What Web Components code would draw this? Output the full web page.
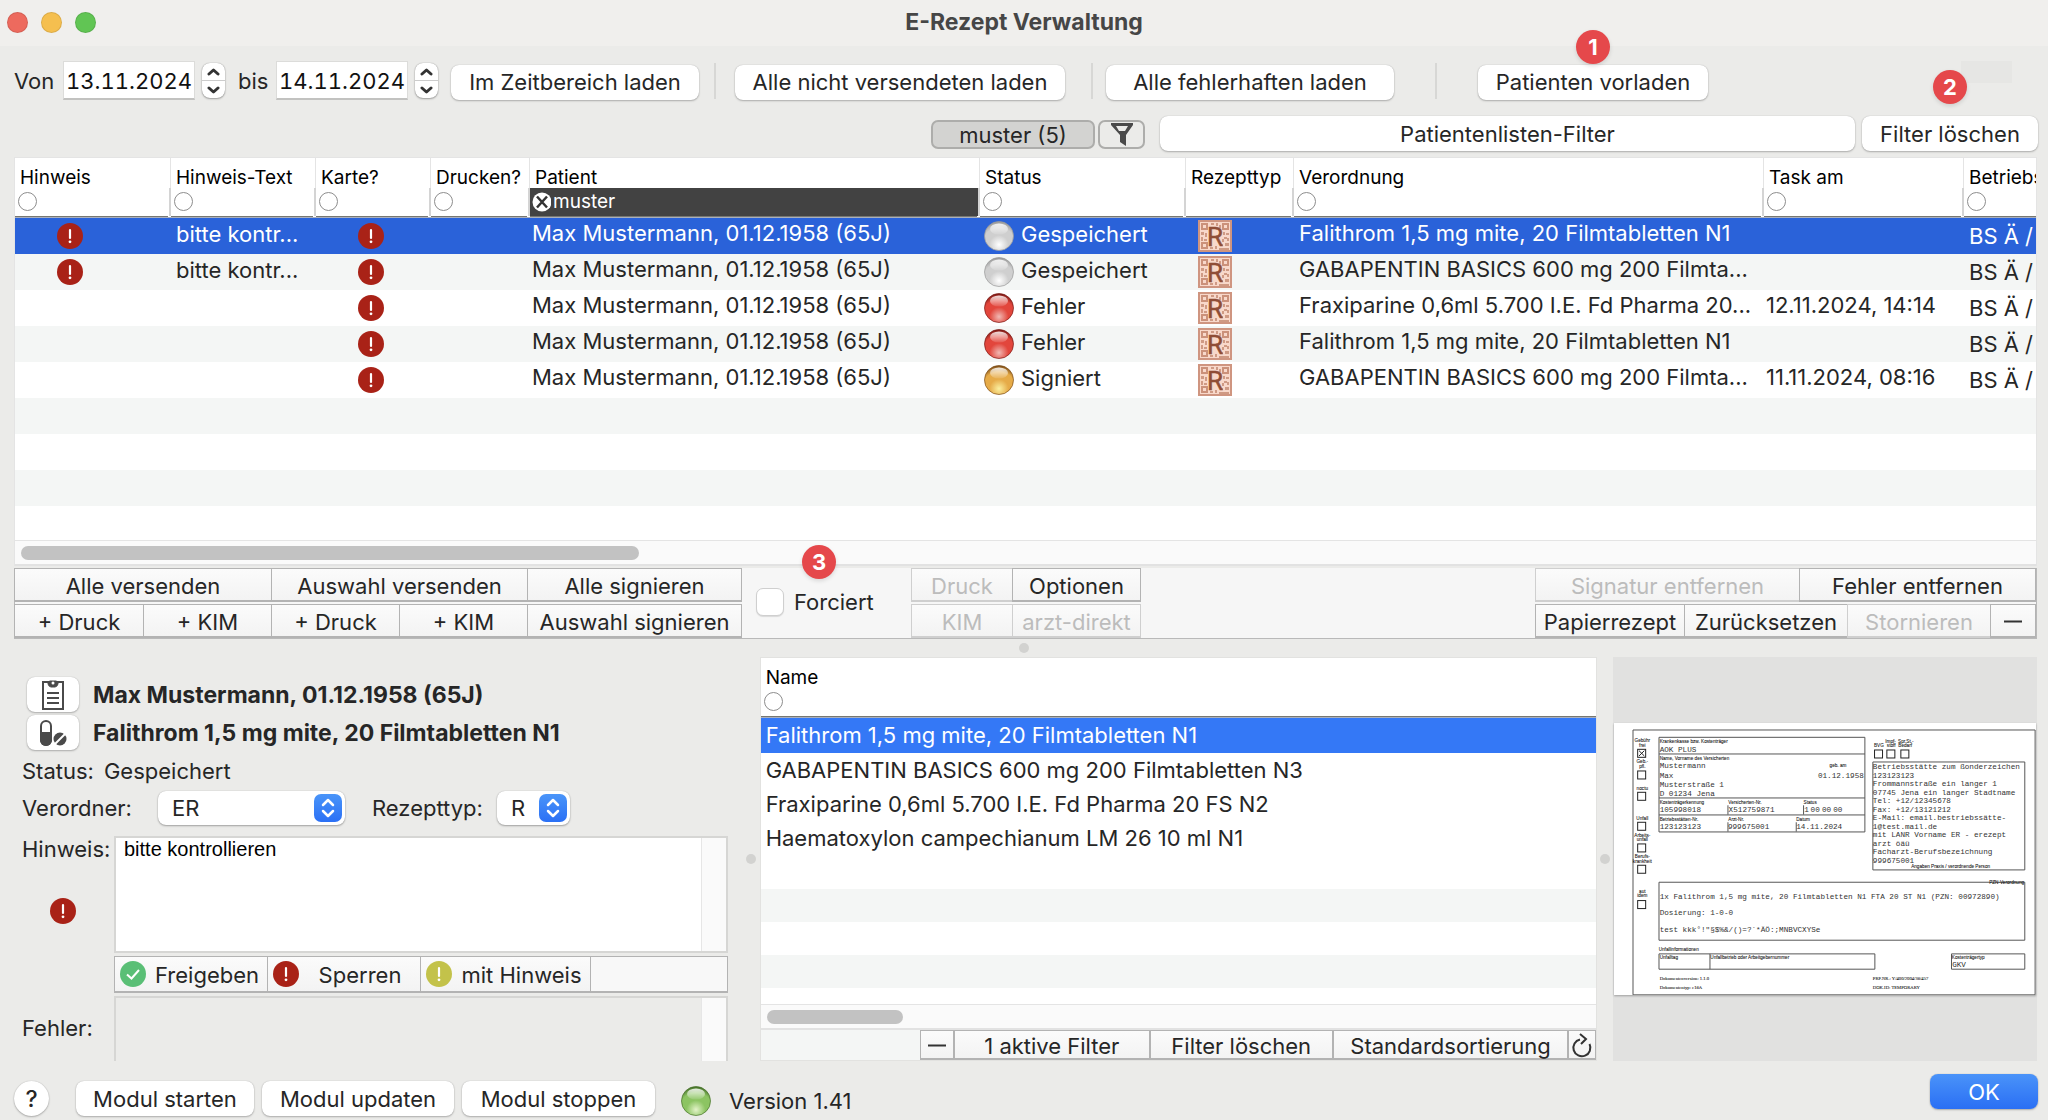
<!DOCTYPE html>
<html lang="de">
<head>
<meta charset="utf-8">
<title>E-Rezept Verwaltung</title>
<style>
html,body{margin:0;height:100%}
body{background:#ebebe9;color:#262626;font:22px/26px Inter,"Liberation Sans",sans-serif}
</style>
</head>
<body>
<rezept-window></rezept-window>
<script>
const BASE = `*{box-sizing:border-box}
button,input,select,textarea{font:inherit;color:inherit;margin:0;padding:0;border:0;background:none;outline:0}
svg{display:block}`;

class Part extends HTMLElement {
  connectedCallback() {
    if (this.shadowRoot) return;
    this.attachShadow({ mode: 'open' }).innerHTML = `<style>${BASE}${this.css()}</style>${this.html()}`;
  }
  css() { return ''; }
  html() { return '<slot></slot>'; }
  a(name, fallback = '') { return this.getAttribute(name) ?? fallback; }
}

customElements.define('mac-button', class extends Part {
  css() { return `
    :host{display:block;height:35px}
    button{width:100%;height:100%;display:flex;align-items:center;justify-content:center;border-radius:8px;background:#fff;white-space:nowrap;
      box-shadow:0 0 1px rgba(0,0,0,.25),0 1px 2px rgba(0,0,0,.25)}
    :host([kind=primary]) button{background:linear-gradient(#4a93f9,#2a6ff4);color:#fff}
    :host([kind=round]) button{border-radius:50%;font-size:23px;font-weight:500}
    :host([kind=toggle]),:host([kind=outline]){height:29px}
    :host([kind=toggle]) button{background:#d3d3d1;border:2px solid #adadab;box-shadow:none;border-radius:7px}
    :host([kind=outline]) button{background:#ebebe9;border:2px solid #adadab;box-shadow:none;border-radius:7px}`; }
  html() { return `<button type="button" aria-label="${this.a('label')}"><slot></slot></button>`.replace(' aria-label=""', ''); }
});

customElements.define('seg-button', class extends Part {
  css() { return `
    :host{display:block;height:34px;min-width:0}
    button{width:100%;height:100%;display:flex;align-items:center;justify-content:center;gap:8px;white-space:nowrap;padding-top:2px;
      border:1px solid #b3b3b3;border-bottom-width:2px;background:linear-gradient(#fbfbfb,#f3f3f3)}
    button:disabled{color:#bcbcbc;border-color:#cfcfcf}`; }
  html() { return `<button type="button" ${this.hasAttribute('off') ? 'disabled' : ''}><slot></slot></button>`; }
});

customElements.define('date-field', class extends Part {
  css() { return `
    :host{display:flex;align-items:center}
    input{width:132px;height:39px;background:#fff;text-align:center;border:1px solid #dcdcda;border-bottom:2px solid #c2c2c0;color:#111;font-variant-numeric:tabular-nums;padding-top:2px}
    label{width:${this.a('lw')}px}
    .step{display:flex;flex-direction:column;width:23px;height:35px;margin-left:7px;border-radius:8px;background:#fff;box-shadow:0 0 1px rgba(0,0,0,.4),0 1px 2px rgba(0,0,0,.3)}
    .step button{flex:1;display:grid;place-items:center}
    .step button+button{border-top:1px solid #ccc}`; }
  html() { return `
    <label for="d">${this.a('label')}</label><input id="d" value="${this.a('value')}">
    <div class="step">
      <button type="button" aria-label="Tag vor"><svg width="13" height="8" fill="none" stroke="#333" stroke-width="3" stroke-linecap="round" stroke-linejoin="round"><path d="M2 6 6.500 2 11 6"/></svg></button>
      <button type="button" aria-label="Tag zurück"><svg width="13" height="8" fill="none" stroke="#333" stroke-width="3" stroke-linecap="round" stroke-linejoin="round"><path d="M2 2 6.500 6 11 2"/></svg></button>
    </div>`; }
});

customElements.define('num-badge', class extends Part {
  css() { return `
    :host{position:absolute;left:50%;width:34px;height:34px;margin-left:-17px;border-radius:50%;background:#e5484b;color:#fff;
      font-weight:700;font-size:22px;line-height:34px;text-align:center;box-shadow:0 2px 4px rgba(0,0,0,.12);z-index:2}`; }
});

customElements.define('alert-icon', class extends Part {
  css() { return `:host{display:inline-block;width:26px;height:26px;flex:none}`; }
  html() {
    const kind = this.a('kind', 'red');
    const fill = { red: '#a92217', green: '#5abf76', yellow: '#c3c24a' }[kind];
    const mark = kind === 'green'
      ? '<path d="M7 13.500 11.500 17.500 19 9" fill="none" stroke="#fff" stroke-width="2"/>'
      : '<path d="M13 7v8" stroke="#fff" stroke-width="2.200" stroke-linecap="round"/><circle cx="13" cy="18.800" r="1.400" fill="#fff"/>';
    return `<svg width="26" height="26"><circle cx="13" cy="13" r="13" fill="${fill}"/>${mark}</svg>`;
  }
});

customElements.define('status-ball', class extends Part {
  css() { return `:host{display:inline-block;width:30px;height:30px;flex:none}`; }
  html() {
    const [edge, mid, low] = {
      grey: ['#9b9b9b', '#cfcfcf', '#ffffff'], red: ['#7e1b17', '#e2463c', '#f0b9b4'],
      gold: ['#80501a', '#e6ab48', '#fbf0a0'], green: ['#47722a', '#8cc462', '#e3f3c8']
    }[this.a('color')];
    return `<svg width="30" height="30" viewBox="0 0 30 30">
      <defs><radialGradient id="g" cx=".5" cy=".8" r=".78"><stop offset="0" stop-color="${low}"/><stop offset=".42" stop-color="${mid}"/><stop offset=".75" stop-color="${mid}"/><stop offset="1" stop-color="${edge}"/></radialGradient>
      <linearGradient id="h" x1="0" y1="0" x2="0" y2="1"><stop offset="0" stop-color="#fff" stop-opacity=".85"/><stop offset="1" stop-color="#fff" stop-opacity=".1"/></linearGradient></defs>
      <circle cx="15" cy="15" r="14.500" fill="url(#g)" stroke="${edge}" stroke-opacity=".7"/><ellipse cx="15" cy="8" rx="9" ry="5.500" fill="url(#h)"/></svg>`;
  }
});

customElements.define('code-icon', class extends Part {
  css() { return `:host{display:inline-block;width:34px;height:32px}`; }
  html() { return `<svg width="34" height="32" viewBox="0 0 34 32">
    <rect x="1" y="1" width="32" height="30" fill="#f8d8ca" stroke="#cf9580" stroke-width="2"/>
    <g fill="none" stroke="#cb917a" stroke-width="2"><rect x="4" y="4" width="5" height="5"/><rect x="25" y="4" width="5" height="5"/><rect x="4" y="23" width="5" height="5"/></g>
    <g fill="#cf9a84"><path d="M13 3h3v2h-3zM18 3h2v3h-2zM21 5h2v3h-2zM12 27h3v2h-3zM17 26h2v3h-2zM21 28h10v2H21zM22 24h3v2h-3zM27 23h4v3h-4zM3 12h3v3H3zM7 13h2v4H7zM3 17h2v4H3zM6 19h3v2H6zM25 12h2v3h-2zM28 13h3v2h-3zM26 17h3v2h-3zM29 18h2v3h-2zM24 19h2v3h-2z"/></g>
    <text x="17" y="26" text-anchor="middle" font-family="Roboto,sans-serif" font-size="26" fill="#8f4d36" stroke="#8f4d36" stroke-width=".5">R</text></svg>`; }
});

customElements.define('column-filter', class extends Part {
  css() { return `:host{display:block}button{display:block;width:19px;height:19px;border:1px solid #8d8d8d;border-radius:50%;background:#fff}`; }
  html() { return `<button type="button" aria-label="Spalte filtern"></button>`; }
});

customElements.define('scroll-strip', class extends Part {
  css() { return `
    :host{display:block;height:26px;flex:none;background:#fafafa;border-top:1px solid #e4e4e4;border-bottom:2px solid #e2e2e2;padding:5px 6px}
    i{display:block;height:14px;border-radius:7px;background:#c2c2c2;width:${this.a('thumb')}}`; }
  html() { return '<i></i>'; }
});

const HEAD = `
  th{padding:0;text-align:left;font-weight:400;font-size:19px;line-height:20px;color:#000;vertical-align:top;height:60px;background:#fff;overflow:hidden;white-space:nowrap;border-bottom:1px solid #a9b0bd}
  .cap{height:30px;padding:10px 0 0 5px;border-right:1px solid #e4e4e4}
  .fil{height:28px;padding:4px 0 0 3px;border-right:2px solid #d4d4d4}
  .line{height:1px;background:#777770;margin-right:3px}
  th:last-child .cap,th:last-child .fil{border-right:0}
  th:last-child .line{margin-right:0}
  .active .fil{background:#424242;color:#fff;display:flex;align-items:center;padding:0 0 0 2px}
  .active input{width:100%;min-width:0;margin-left:2px}`;

customElements.define('rezept-table', class extends Part {
  css() { return `
    :host{display:flex;flex-direction:column;border:1px solid #e4e4e4;border-bottom:0;min-height:0;overflow:hidden}
    .body{flex:1;min-height:0;overflow:hidden;background:repeating-linear-gradient(#f4f6f5 0 36px,#fff 36px 72px) 0 24px}
    table{border-collapse:separate;border-spacing:0;table-layout:fixed;width:100%}
    ${HEAD}
    td{padding:0 0 5px 2px;height:36px;white-space:nowrap;overflow:hidden;line-height:31px;vertical-align:middle}
    tr:nth-child(odd) td{background:#fff}
    tr:nth-child(even) td{background:#f4f6f5}
    tr.on td{background:#2a62d9;color:#fff}
    td.drug{padding-left:5px}
    td.hint{padding:0 0 3px 5px}
    td.bs{padding:1px 0 0 5px}
    td.ico,td.ico2,td.code{line-height:0;padding:0 0 1px}
    td.ico{padding-right:47px;text-align:center}
    td.ico2{padding-right:5px;text-align:center}
    td.code{padding-left:12px}
    td alert-icon,td code-icon{vertical-align:top}
    td.state{padding:0 0 1px 4px}
    .st{display:flex;align-items:center;gap:7px}
    .st span{padding-bottom:3px}`; }
  html() {
    const cols = [['Hinweis', 156], ['Hinweis-Text', 145], ['Karte?', 115], ['Drucken?', 99], ['Patient', 450], ['Status', 206], ['Rezepttyp', 108], ['Verordnung', 470], ['Task am', 200], ['Betriebs', '']];
    const rows = [
      [1, 'grey', 'Gespeichert', 'Falithrom 1,5 mg mite, 20 Filmtabletten N1', ''],
      [1, 'grey', 'Gespeichert', 'GABAPENTIN BASICS 600 mg 200 Filmta...', ''],
      [0, 'red', 'Fehler', 'Fraxiparine 0,6ml 5.700 I.E. Fd Pharma 20...', '12.11.2024, 14:14'],
      [0, 'red', 'Fehler', 'Falithrom 1,5 mg mite, 20 Filmtabletten N1', ''],
      [0, 'gold', 'Signiert', 'GABAPENTIN BASICS 600 mg 200 Filmta...', '11.11.2024, 08:16']];
    const th = ([name]) => name === 'Patient'
      ? `<th class="active"><div class="cap">${name}</div><div class="fil"><svg width="20" height="20"><circle cx="10" cy="10" r="9.500" fill="#fff"/><path d="M5 4.500 15 15.500M15 4.500 5 15.500" stroke="#333" stroke-width="2.500"/></svg><input aria-label="Patient filtern" value="muster"></div><div class="line"></div></th>`
      : `<th><div class="cap">${name}</div><div class="fil">${name === 'Rezepttyp' ? '' : '<column-filter></column-filter>'}</div><div class="line"></div></th>`;
    return `<div class="body"><table><colgroup>${cols.map(c => `<col${c[1] ? ` style="width:${c[1]}px"` : ''}>`).join('')}</colgroup>
      <thead><tr>${cols.map(th).join('')}</tr></thead>
      <tbody>${rows.map(([hint, color, status, drug, task], i) => `<tr class="${i ? '' : 'on'}">
        <td class="ico">${hint ? '<alert-icon></alert-icon>' : ''}</td><td class="hint">${hint ? 'bitte kontr...' : ''}</td>
        <td class="ico2"><alert-icon></alert-icon></td><td></td><td>Max Mustermann, 01.12.1958 (65J)</td>
        <td class="state"><div class="st"><status-ball color="${color}"></status-ball><span>${status}</span></div></td>
        <td class="code"><code-icon></code-icon></td><td class="drug">${drug}</td><td>${task}</td><td class="bs">BS Ä /</td></tr>`).join('')}</tbody></table></div>
      <scroll-strip thumb="618px"></scroll-strip>`;
  }
});

customElements.define('name-table', class extends Part {
  css() { return `
    :host{display:flex;flex-direction:column;min-width:0}
    .box{flex:1;display:flex;flex-direction:column;min-height:0;border:1px solid #e2e2e0;border-bottom:0}
    .body{flex:1;min-height:0;overflow:hidden;background:repeating-linear-gradient(#f4f6f5 0 33px,#fff 33px 66px) 0 33px}
    table{border-collapse:separate;border-spacing:0;width:100%}
    ${HEAD}
    td{padding:0 0 0 5px;height:34px;line-height:34px;background:#fff;white-space:nowrap}
    tr.on td{background:#3478f6;color:#fff;padding-bottom:1px}
    tr:last-child td{height:68px;vertical-align:top}
    .foot{display:grid;grid-template-columns:minmax(0,160fr) 34px minmax(0,196fr) minmax(0,184fr) minmax(0,236fr) 28px;border:1px solid #e2e2e0;border-top:0;background:#f4f6f5}
    seg-button{height:30px}`; }
  html() {
    const names = ['Falithrom 1,5 mg mite, 20 Filmtabletten N1', 'GABAPENTIN BASICS 600 mg 200 Filmtabletten N3', 'Fraxiparine 0,6ml 5.700 I.E. Fd Pharma 20 FS N2', 'Haematoxylon campechianum LM 26 10 ml N1'];
    return `<div class="box"><div class="body"><table><thead><tr><th><div class="cap">Name</div><div class="fil"><column-filter></column-filter></div><div class="line"></div></th></tr></thead>
      <tbody>${names.map((n, i) => `<tr class="${i ? '' : 'on'}"><td>${n}</td></tr>`).join('')}</tbody></table></div>
      <scroll-strip thumb="136px"></scroll-strip></div>
      <div class="foot"><span></span><seg-button><svg width="18" height="3"><path d="M0 1.500h18" stroke="#333" stroke-width="2"/></svg></seg-button>
      <seg-button>1 aktive Filter</seg-button><seg-button>Filter löschen</seg-button><seg-button>Standardsortierung</seg-button>
      <seg-button><svg width="22" height="26" fill="none" stroke="#333" stroke-width="2"><path d="M9 6.500A8.500 8.500 0 1 0 18.500 11M9 1l6 5-5 5"/></svg></seg-button></div>`;
  }
});

customElements.define('popup-select', class extends Part {
  css() { return `
    :host{display:flex;align-items:center}
    label{width:${this.a('lw')}px;flex:none}
    .wrap{display:grid;width:${this.a('w')}px}
    .wrap>*{grid-area:1/1}
    select{appearance:none;height:34px;border-radius:8px;background:#fff;padding-left:14px;box-shadow:0 0 1px rgba(0,0,0,.25),0 1px 2px rgba(0,0,0,.3)}
    svg{justify-self:end;align-self:center;margin-right:3px;pointer-events:none}`; }
  html() { return `<label for="s">${this.a('label')}</label><div class="wrap"><select id="s"><option>${this.a('value')}</option></select>
    <svg width="28" height="28"><defs><linearGradient id="b" x2="0" y2="1"><stop stop-color="#4a95f9"/><stop offset="1" stop-color="#2b70f5"/></linearGradient></defs>
    <rect width="28" height="28" rx="7" fill="url(#b)"/><path d="M9 11 14 6l5 5M9 17l5 5 5-5" fill="none" stroke="#fff" stroke-width="2.500" stroke-linecap="round" stroke-linejoin="round"/></svg></div>`; }
});

customElements.define('detail-panel', class extends Part {
  css() { return `
    :host{display:flex;flex-direction:column;padding:20px 0 0 8px;min-width:0}
    .head{display:grid;grid-template-columns:52px 1fr;column-gap:14px;row-gap:3px;margin-left:5px;font-weight:700;font-size:23px;align-items:center}
    .head mac-button{height:35px}
    .status{display:flex;gap:10px;margin-top:8px;height:26px}
    .picks{display:flex;gap:27px;margin-top:7px}
    .grid{display:grid;grid-template-columns:92px minmax(0,1fr);margin-top:11px;row-gap:3px}
    .side{display:flex;flex-direction:column}
    .side alert-icon{margin:36px 0 0 28px}
    .memo{display:flex;border:2px solid #d6d6d4}
    textarea{flex:1;height:113px;resize:none;background:#fff;color:#000;font:20px/22px "Liberation Sans",sans-serif;padding:0 8px;display:block;min-width:0;overflow:hidden}
    .track{width:25px;background:#fafafa;border-left:1px solid #e6e6e6}
    .acts{display:grid;grid-template-columns:153px 153px 170px 1fr;border:1px solid #b3b3b3;border-bottom-width:2px;grid-column:2;background:#f8f8f8}
    .acts button{display:flex;align-items:center;height:34px;border-right:1px solid #b3b3b3;padding:0 3px 0 5px;background:linear-gradient(#fbfbfb,#f3f3f3)}
    .acts span{flex:1;text-align:center;padding:2px 0 0 4px}
    .err{border-bottom:0}
    .err textarea{height:63px;background:#ebebe9}
    .errl{align-self:center;padding-bottom:2px}`; }
  html() { return `
    <div class="head">
      <mac-button label="Patient"><svg width="24" height="30" fill="none" stroke="#4a4a4a" stroke-width="2"><rect x="2" y="2" width="20" height="27"/><path d="M7 2v2q1 3 3 3h4q2 0 3-3V2l-2-1H9z" fill="#4a4a4a" stroke-width="1"/><circle cx="12" cy="3" r="1.500" fill="#fff" stroke="none"/><path d="M6 13h12M6 18h12M6 23h12"/></svg></mac-button>
      <span>Max Mustermann, 01.12.1958 (65J)</span>
      <mac-button label="Medikament"><svg width="28" height="28"><rect x="2" y="2" width="10" height="24" rx="5" fill="#fff" stroke="#4a4a4a" stroke-width="2"/><path d="M1 13h12v8a6 6 0 0 1-12 0z" fill="#4a4a4a"/><circle cx="21" cy="20" r="6.500" fill="#4a4a4a"/><path d="M16 25 26 15" stroke="#fff" stroke-width="2"/></svg></mac-button>
      <span>Falithrom 1,5 mg mite, 20 Filmtabletten N1</span>
    </div>
    <div class="status"><span>Status:</span><span>Gespeichert</span></div>
    <div class="picks"><popup-select label="Verordner:" value="ER" lw="136" w="187"></popup-select><popup-select label="Rezepttyp:" value="R" lw="125" w="73"></popup-select></div>
    <div class="grid">
      <div class="side"><label for="h">Hinweis:</label><alert-icon></alert-icon></div>
      <div class="memo"><textarea id="h">bitte kontrollieren</textarea><div class="track"></div></div>
      <div class="acts"><button type="button"><alert-icon kind="green"></alert-icon><span>Freigeben</span></button><button type="button"><alert-icon></alert-icon><span>Sperren</span></button><button type="button"><alert-icon kind="yellow"></alert-icon><span>mit Hinweis</span></button></div>
      <label class="errl" for="f">Fehler:</label>
      <div class="memo err"><textarea id="f" readonly></textarea><div class="track"></div></div>
    </div>`; }
});

customElements.define('rezept-preview', class extends Part {
  css() { return `
    :host{display:flex;align-items:center;background:#e1e1e0;min-width:0;padding:0 1px}
    svg{width:100%;height:auto;background:#fff;box-shadow:0 1px 2px rgba(0,0,0,.3)}
    .m{font-family:"Liberation Mono",monospace;font-size:23px;fill:#333}
    .s{font-family:"Liberation Sans",sans-serif;font-size:14px;fill:#111;stroke:#111;stroke-width:.2px}
    .r{font-family:"Liberation Serif",serif;font-size:14px;fill:#111;stroke:#111;stroke-width:.2px}
    .c{text-anchor:middle}`; }
  html() {
    const t = (cls, list) => list.map(([x, y, s]) => `<text class="${cls}" x="${x}" y="${y}">${s}</text>`).join('');
    const sq = list => list.map(([x, y]) => `<rect x="${x}" y="${y}" width="24" height="24"/>`).join('');
    return `<svg viewBox="43 37 1266 817" role="img" aria-label="Rezeptvorschau">
      <g fill="none" stroke="#555" stroke-width="3">
      <path d="M100 853V58H1307V853z"/><path d="M178 80H796V364H178zM178 130H796M178 262H796M178 313H796M385 284v28M612 284v28M385 335v28M590 335v28"/>
      <path d="M820 154h456v324H820zM178 515h1098v174H178zM178 730h648v46H178zM331 730v46M1056 730h220v46h-220z"/></g>
      <g fill="none" stroke="#222" stroke-width="3">${sq([[114, 116], [114, 181], [114, 245], [114, 335], [114, 400], [114, 464], [114, 570], [825, 118], [862, 118], [904, 118]])}<path d="M118 120l16 16M134 120l-16 16"/></g>
      ${t('m', [[180, 123, 'AOK PLUS'], [180, 173, 'Mustermann'], [180, 201, 'Max'], [655, 201, '01.12.1958'], [180, 229, 'Musterstraße 1'], [180, 255, 'D 01234 Jena'], [180, 304, '105998018'], [387, 304, 'X512759871'], [614, 304, '1'], [633, 304, '00'], [667, 304, '00'], [701, 304, '00'], [180, 355, '123123123'], [385, 355, '999675001'], [590, 355, '14.11.2024'],
        [180, 565, '1x Falithrom 1,5 mg mite, 20 Filmtabletten N1 FTA 20 ST N1 (PZN: 00972890)'], [180, 614, 'Dosierung: 1-0-0'], [180, 663, 'test kkk°!"§$%&amp;/()=?`*ÄÖ:;MNBVCXYSe'], [1058, 768, 'GKV'],
        ...['Betriebsstätte zum ßonderzeichen', '123123123', 'Frommannstraße ein langer 1', '07745 Jena ein langer Stadtname', 'Tel: +12/12345678', 'Fax: +12/13121212', 'E-Mail: email.bestriebssätte-', '1@test.mail.de', 'mit LANR Vorname ER - erezept', 'arzt öäü', 'Facharzt-Berufsbezeichnung', '999675001'].map((s, i) => [820, 175 + Math.round(i * 25.6), s])])}
      ${t('s', [[180, 97, 'Krankenkasse bzw. Kostenträger'], [180, 148, 'Name, Vorname des Versicherten'], [690, 170, 'geb. am'], [180, 279, 'Kostenträgerkennung'], [386, 279, 'Versicherten-Nr.'], [612, 279, 'Status'], [180, 331, 'Betriebsstätten-Nr.'], [386, 331, 'Arzt-Nr.'], [590, 331, 'Datum'],
        [935, 473, 'Angaben Praxis / verordnende Person'], [1169, 519, 'PZN-Verordnung'], [177, 722, 'Unfallinformationen'], [180, 745, 'Unfalltag'], [332, 745, 'Unfallbetrieb oder Arbeitgebernummer'], [1057, 745, 'Kostenträgertyp']])}
      ${t('s c', [[128, 94, 'Gebühr'], [128, 108, 'frei'], [128, 158, 'Geb.-'], [128, 172, 'pfl.'], [128, 237, 'noctu'], [128, 328, 'Unfall'], [128, 378, 'Arbeits-'], [128, 391, 'unfall'], [128, 442, 'Berufs-'], [128, 456, 'krankheit'], [128, 546, 'aut'], [128, 560, 'idem'], [838, 110, 'BVG'], [873, 96, 'Impf-'], [875, 110, 'stoff'], [919, 96, 'Spr.St.-'], [917, 110, 'Bedarf']])}
      ${t('r', [[180, 808, 'Dokumentenversion: 1.1.0'], [180, 834, 'Dokumententyp: e16A'], [820, 808, 'PRF.NR.: Y/400/2004/36/457'], [820, 834, 'DOK.ID: TEMPORARY']])}</svg>`;
  }
});

customElements.define('action-bar', class extends Part {
  css() { return `
    :host{display:grid;grid-template-columns:129px 128px 128px 128px 214px 170px 101px 128px minmax(0,1fr) auto;grid-template-rows:34px 34px;row-gap:2px;background:#f6f6f6;
      border:1px solid #b9b9b9;border-top:0}
    seg-button{margin-left:-1px}
    .w2{grid-column:span 2}
    .force{grid-row:1/3;grid-column:6;display:flex;align-items:center;position:relative;padding:0 0 2px 14px}
    .force label{margin-left:10px}
    .force input{appearance:none;width:28px;height:28px;border-radius:7px;background:#fff;border:1px solid #cfcfcf;box-shadow:0 1px 1px rgba(0,0,0,.12)}
    .a{grid-row:1}.b{grid-row:2}
    .right{grid-column:10;grid-row:1/3;display:flex;flex-direction:column;gap:2px;width:500px}
    .right div{display:grid;grid-template-columns:264px 236px}
    .right div+div{grid-template-columns:149px 163px 143px 45px}
    num-badge{top:-23px;left:77px}`; }
  html() { return `
    <seg-button class="a w2">Alle versenden</seg-button><seg-button class="a w2">Auswahl versenden</seg-button><seg-button class="a">Alle signieren</seg-button>
    <div class="force"><input type="checkbox" id="c"><label for="c">Forciert</label><num-badge>3</num-badge></div>
    <seg-button class="a" off>Druck</seg-button><seg-button class="a">Optionen</seg-button>
    <seg-button class="b">+ Druck</seg-button><seg-button class="b">+ KIM</seg-button><seg-button class="b">+ Druck</seg-button><seg-button class="b">+ KIM</seg-button><seg-button class="b">Auswahl signieren</seg-button>
    <seg-button class="b" off style="grid-column:7">KIM</seg-button><seg-button class="b" off>arzt-direkt</seg-button>
    <div class="right"><div><seg-button off>Signatur entfernen</seg-button><seg-button>Fehler entfernen</seg-button></div>
    <div><seg-button>Papierrezept</seg-button><seg-button>Zurücksetzen</seg-button><seg-button off>Stornieren</seg-button><seg-button><svg width="18" height="3"><path d="M0 1.500h18" stroke="#333" stroke-width="2"/></svg></seg-button></div></div>`; }
});

customElements.define('window-title', class extends Part {
  css() { return `
    :host{display:grid;grid-template-columns:1fr auto 1fr;align-items:center;height:46px;background:#f0efed;padding:0 7px 2px}
    .dots{display:flex;gap:13px}
    i{width:21px;height:21px;border-radius:50%;background:var(--c);border:1px solid rgba(0,0,0,.1)}
    h1{margin:0;font-size:23px;line-height:26px;font-weight:700;color:#464646}`; }
  html() { return `<div class="dots"><i style="--c:#ed6a5e"></i><i style="--c:#f5bf4f"></i><i style="--c:#61c554"></i></div><h1><slot></slot></h1><span></span>`; }
});

customElements.define('filter-bar', class extends Part {
  css() { return `
    :host{display:block;padding:15px 10px 6px 14px}
    .row{display:flex;align-items:center;height:39px}
    .row mac-button{margin-top:3px}
    .sep{width:2px;height:36px;background:#d7d7d5}
    .at{position:relative}
    .two{display:flex;align-items:center;justify-content:flex-end;height:35px;margin-top:16px}
    .two mac-button[kind]{margin-top:2px}
    .list{width:695px;margin:0 7px 0 15px}
    .fade{width:51px;height:22px;margin-left:253px;background:#e6e6e4;align-self:flex-start}`; }
  html() { return `
    <div class="row"><date-field label="Von" lw="49" value="13.11.2024"></date-field><date-field style="margin-left:13px" label="bis" lw="38" value="14.11.2024"></date-field>
      <mac-button style="width:248px;margin-left:13px">Im Zeitbereich laden</mac-button><span class="sep" style="margin:0 19px 0 15px"></span>
      <mac-button style="width:330px">Alle nicht versendeten laden</mac-button><span class="sep" style="margin:0 13px 0 26px"></span>
      <mac-button style="width:288px">Alle fehlerhaften laden</mac-button><span class="sep" style="margin:0 41px"></span>
      <div class="at"><mac-button style="width:230px">Patienten vorladen</mac-button><num-badge style="top:-32px">1</num-badge></div><span class="fade"></span></div>
    <div class="two"><mac-button kind="toggle" style="width:164px">muster (5)</mac-button>
      <mac-button kind="outline" label="Filter" style="width:47px;margin-left:3px"><svg width="22" height="23"><path d="M0 0h22v2l-7 10v11l-6-4v-7L0 2z" fill="#4a4a4a"/><path d="M5 3h12l-3 5H8z" fill="#ebebe9"/></svg></mac-button>
      <mac-button class="list">Patientenlisten-Filter</mac-button>
      <div class="at"><mac-button style="width:176px">Filter löschen</mac-button><num-badge style="top:-46px">2</num-badge></div></div>`; }
});

customElements.define('window-footer', class extends Part {
  css() { return `
    :host{display:flex;align-items:flex-start;height:59px;padding:13px 10px 0 14px}
    .low{margin-top:7px;height:35px;display:flex;align-items:center}
    .low mac-button+mac-button{margin-left:8px}
    .low mac-button[kind=round]+mac-button{margin-left:27px}
    status-ball{margin:4px 18px 0 26px}
    .v{margin-top:4px}
    .ok{width:108px;margin-left:auto}`; }
  html() { return `<div class="low"><mac-button kind="round" style="width:35px">?</mac-button>
    <mac-button style="width:178px">Modul starten</mac-button><mac-button style="width:192px">Modul updaten</mac-button><mac-button style="width:193px">Modul stoppen</mac-button>
    <status-ball color="green"></status-ball><span class="v">Version 1.41</span></div><mac-button class="ok" kind="primary">OK</mac-button>`; }
});

customElements.define('split-grip', class extends Part {
  css() { return `:host{display:grid;place-items:center}i{width:10px;height:10px;border-radius:50%;background:#d2d2d0}`; }
  html() { return '<i></i>'; }
});

customElements.define('rezept-window', class extends Part {
  css() { return `
    :host{display:flex;flex-direction:column;min-height:100vh}
    rezept-table{flex:1;margin:0 11px 0 14px}
    action-bar{margin:2px 11px 0 14px}
    .grip{height:18px}
    .lower{display:grid;grid-template-columns:minmax(0,714fr) 32px minmax(0,838fr) 16px minmax(0,424fr);margin:0 11px 0 14px}
    .lower split-grip:nth-of-type(1){padding-left:14px}`; }
  html() { return `<window-title>E-Rezept Verwaltung</window-title><filter-bar></filter-bar><rezept-table></rezept-table><action-bar></action-bar>
    <split-grip class="grip"></split-grip>
    <div class="lower"><detail-panel></detail-panel><split-grip></split-grip><name-table></name-table><split-grip></split-grip><rezept-preview></rezept-preview></div>
    <window-footer></window-footer>`; }
});
</script>
</body>
</html>
